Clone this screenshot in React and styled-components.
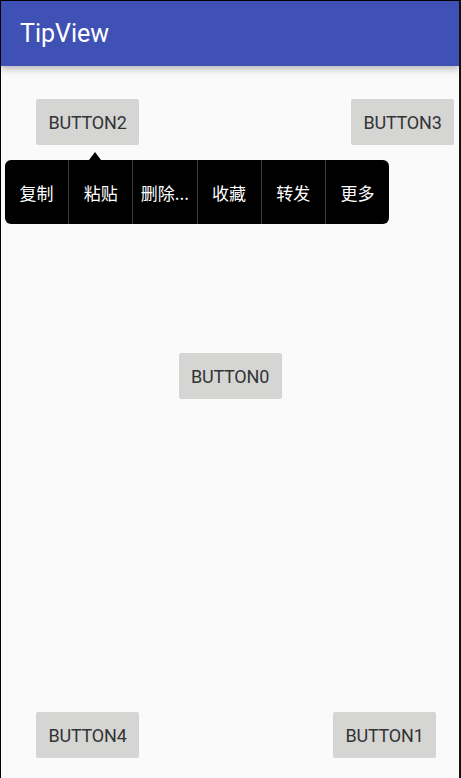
import React from 'react'
import styled, { createGlobalStyle } from 'styled-components'

const Global = createGlobalStyle`
  html, body {
    margin: 0;
    padding: 0;
    background: #000;
  }
  * { box-sizing: border-box; }
`

const Screen = styled.div`
  position: relative;
  width: 461px;
  height: 778px;
  background: #fafafa;
  border-left: 1px solid #000;
  border-top: 1px solid #000;
  border-right: 2px solid #111;
  font-family: Roboto, "Noto Sans CJK SC", sans-serif;
  display: flex;
  flex-direction: column;
  overflow: hidden;
`

const AppBar = styled.div`
  height: 65px;
  flex-shrink: 0;
  background: #3f51b5;
  display: flex;
  align-items: center;
  padding-left: 19px;
  color: #fff;
  font-size: 25px;
  position: relative;
  z-index: 1;
  box-shadow: 0 3px 7px rgba(0, 0, 0, 0.28);
`

const Content = styled.div`
  flex: 1;
  position: relative;
  display: flex;
  flex-direction: column;
`

const Row = styled.div`
  display: flex;
  justify-content: ${p => p.justify || 'space-between'};
  padding: ${p => p.pad || 0};
`

const Button = styled.div`
  width: 103px;
  height: 46px;
  background: #d5d6d4;
  border-radius: 2px;
  display: flex;
  align-items: center;
  justify-content: center;
  color: #333;
  font-size: 18px;
  letter-spacing: -0.2px;
`

const Spacer = styled.div`
  flex: ${p => p.grow};
`

const Tip = styled.div`
  position: absolute;
  left: 4px;
  top: 94px;
  width: 384px;
  height: 64px;
  background: #000;
  border-radius: 6px;
  display: flex;
  &::before {
    content: '';
    position: absolute;
    left: 84px;
    top: -8px;
    border-left: 6px solid transparent;
    border-right: 6px solid transparent;
    border-bottom: 8px solid #000;
  }
`

const TipItem = styled.div`
  flex: 1;
  display: flex;
  align-items: center;
  justify-content: center;
  color: #fff;
  font-size: 17px;
  font-family: "Noto Sans CJK SC", sans-serif;
  & + & {
    border-left: 1px solid #3a3a3a;
  }
`

const items = ['复制', '粘贴', '删除...', '收藏', '转发', '更多']

const App = () => {
  return (
    <Screen>
      <Global />
      <AppBar>TipView</AppBar>
      <Content>
        <Row pad="33px 5px 0 35px">
          <Button>BUTTON2</Button>
          <Button>BUTTON3</Button>
        </Row>
        <Spacer grow={208} />
        <Row justify="center">
          <Button>BUTTON0</Button>
        </Row>
        <Spacer grow={312} />
        <Row pad="0 23px 20px 35px">
          <Button>BUTTON4</Button>
          <Button>BUTTON1</Button>
        </Row>
        <Tip>
          {items.map(t => (
            <TipItem key={t}>{t}</TipItem>
          ))}
        </Tip>
      </Content>
    </Screen>
  )
}

export default App
